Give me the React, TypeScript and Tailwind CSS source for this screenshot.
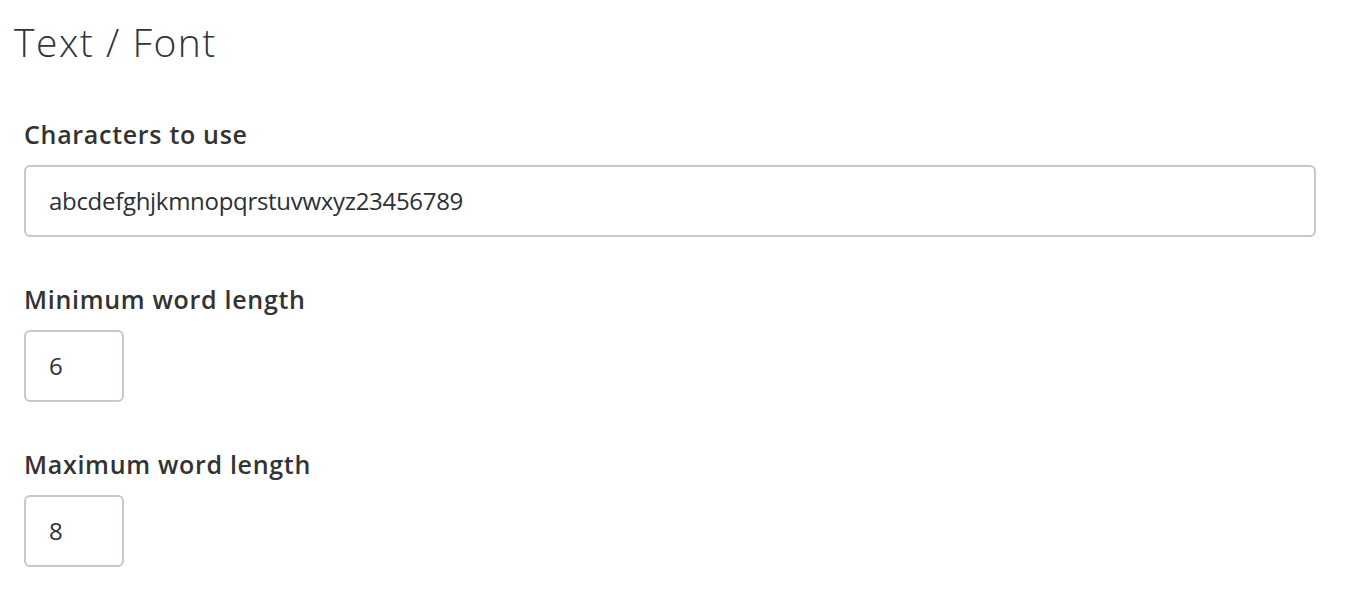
import React from "react";

const font = { fontFamily: '"Open Sans", "Noto Sans", sans-serif' };

function Field({ label, value, wide }: { label: string; value: string; wide?: boolean }) {
  return (
    <div className="flex flex-col">
      <label className="text-[25px] font-semibold leading-[32px] tracking-[0.7px] text-[#333333]">{label}</label>
      <div
        className={
          wide
            ? "mt-[15px] flex h-[72px] w-[1292px] items-center rounded-[6px] border-2 border-[#c4c9ce] bg-white px-[23px] text-[24px] tracking-[-0.3px] text-[#2b3137]"
            : "mt-[15px] flex h-[72px] w-[100px] items-center rounded-[6px] border-2 border-[#c4c9ce] bg-white px-[23px] text-[24px] text-[#2b3137]"
        }
      >
        {value}
      </div>
    </div>
  );
}

export default function App() {
  return (
    <div className="min-h-screen bg-white" style={font}>
      <h1 className="pl-[14px] pt-[16px] text-[39px] font-light leading-[52px] tracking-[1.5px] text-[#2f353b]">Text / Font</h1>
      <div className="flex flex-col gap-[46px] pl-[24px] pt-[50px]">
        <Field label="Characters to use" value="abcdefghjkmnopqrstuvwxyz23456789" wide />
        <Field label="Minimum word length" value="6" />
        <Field label="Maximum word length" value="8" />
      </div>
    </div>
  );
}
